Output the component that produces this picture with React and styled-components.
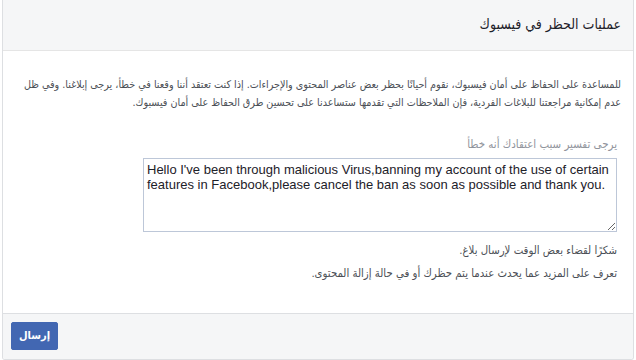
import React from "react";
import styled, { createGlobalStyle } from "styled-components";

const Global = createGlobalStyle`
  html, body { margin: 0; padding: 0; background: #ffffff; }
  body { font-family: "DejaVu Sans Condensed", "DejaVu Sans", sans-serif; }
`;

const Card = styled.div`
  box-sizing: border-box;
  width: 632px;
  height: 360px;
  margin-left: 2px;
  border: 1px solid #dddfe2;
  border-top: none;
  border-radius: 0 0 3px 3px;
  display: flex;
  flex-direction: column;
  direction: rtl;
  overflow: hidden;
`;

const Header = styled.div`
  height: 51px;
  box-sizing: border-box;
  background: #f5f6f7;
  border-bottom: 1px solid #e5e5e5;
  display: flex;
  align-items: center;
  padding: 0 12px 3px 12px;
`;

const Title = styled.h2`
  margin: 0;
  font-size: 14px;
  font-weight: normal;
  color: #1d2129;
`;

const Body = styled.div`
  flex: 1;
  padding: 25px 12px 0 12px;
  display: flex;
  flex-direction: column;
`;

const Intro = styled.p`
  margin: 0;
  font-size: 10.7px;
  line-height: 18px;
  color: #4b4f56;
  white-space: nowrap;
`;

const Form = styled.div`
  margin-top: 24px;
  padding-right: 4px;
  display: flex;
  flex-direction: column;
`;

const Label = styled.label`
  font-size: 11.4px;
  line-height: 16px;
  color: #90949c;
  margin-bottom: 6px;
`;

const TextArea = styled.textarea`
  box-sizing: border-box;
  width: 474px;
  height: 74px;
  direction: ltr;
  font-family: "Liberation Sans", Arial, sans-serif;
  font-size: 13px;
  line-height: 15px;
  color: #1d2129;
  border: 1px solid #bdc7d8;
  padding: 3px 3px;
  margin: 0;
  resize: both;
  outline: none;
`;

const Note = styled.p`
  margin: ${(p) => p.$top}px 0 0 0;
  font-size: 11.3px;
  line-height: 16px;
  color: #4b4f56;
`;

const Footer = styled.div`
  height: 46px;
  box-sizing: border-box;
  background: #f5f6f7;
  border-top: 1px solid #dddfe2;
  display: flex;
  align-items: center;
  direction: ltr;
  padding: 0 0 2px 8px;
`;

const SendButton = styled.button`
  width: 47px;
  height: 28px;
  background: #4267b2;
  border: 1px solid #4267b2;
  border-radius: 2px;
  color: #ffffff;
  font-family: "DejaVu Sans Condensed", "DejaVu Sans", sans-serif;
  font-weight: bold;
  font-size: 11px;
  padding: 0;
  cursor: pointer;
`;

export default function App() {
  return (
    <>
      <Global />
      <Card>
        <Header>
          <Title>عمليات الحظر في فيسبوك</Title>
        </Header>
        <Body>
          <Intro>
            للمساعدة على الحفاظ على أمان فيسبوك، نقوم أحيانًا بحظر بعض عناصر المحتوى والإجراءات. إذا كنت تعتقد أننا وقعنا في خطأ، يرجى إبلاغنا. وفي ظل
            <br />
            عدم إمكانية مراجعتنا للبلاغات الفردية، فإن الملاحظات التي تقدمها ستساعدنا على تحسين طرق الحفاظ على أمان فيسبوك.
          </Intro>
          <Form>
            <Label>يرجى تفسير سبب اعتقادك أنه خطأ</Label>
            <TextArea defaultValue="Hello I've been through malicious Virus,banning my account of the use of certain features in Facebook,please cancel the ban as soon as possible and thank you." />
            <Note $top={11}>شكرًا لقضاء بعض الوقت لإرسال بلاغ.</Note>
            <Note $top={7}>تعرف على المزيد عما يحدث عندما يتم حظرك أو في حالة إزالة المحتوى.</Note>
          </Form>
        </Body>
        <Footer>
          <SendButton>إرسال</SendButton>
        </Footer>
      </Card>
    </>
  );
}
